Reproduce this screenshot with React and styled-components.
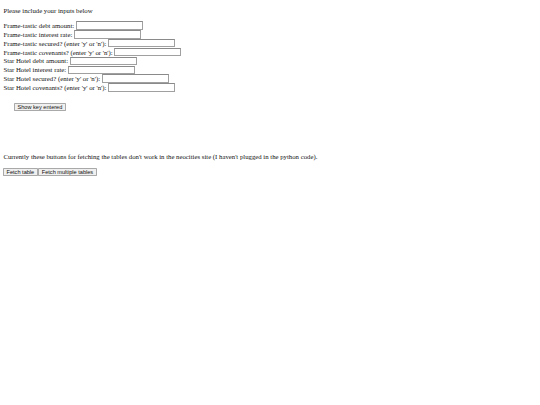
import React from 'react';
import styled, { createGlobalStyle } from 'styled-components';

const GlobalStyle = createGlobalStyle`
    html {
        zoom: 0.421875;
    }
    body {
        margin: 0 8px 8px 8px;
        font-family: "Liberation Serif", "Times New Roman", serif;
        font-size: 16px;
        color: #111;
        background: white;
    }
`

const Intro = styled.p`
    margin: 16px 0;
    line-height: 18px;
`

const Form = styled.form`
    margin: 0;
`

const Row = styled.div`
    display: flex;
    align-items: center;
    gap: 4px;
    height: 21px;
`

const TextInput = styled.input`
    box-sizing: border-box;
    font-family: "Liberation Sans", Arial, sans-serif;
    font-size: 13.33px;
    width: 159px;
    height: 20px;
    padding: 1px 2px;
    margin: 0;
    border: 1px solid #a0a0a0;
    border-top-color: #8a8a8a;
`

const Button = styled.button`
    font-family: "Liberation Sans", Arial, sans-serif;
    font-size: 13.33px;
    padding: 1px 6px;
    height: 19px;
    background: #f0f0f0;
    border: 1px solid #a9a9a9;
    border-radius: 2px;
    color: #111;
`

const KeyBox = styled.div`
    margin: 25px 0 0 25px;
`

const Note = styled.p`
    margin: 100px 0 18px;
    line-height: 18px;
`

const ButtonRow = styled.div`
    display: flex;
    gap: 1px;
    margin-left: -1px;
`

const fields = [
    'Frame-tastic debt amount:',
    'Frame-tastic interest rate:',
    "Frame-tastic secured? (enter 'y' or 'n'):",
    "Frame-tastic covenants? (enter 'y' or 'n'):",
    'Star Hotel debt amount:',
    'Star Hotel interest rate:',
    "Star Hotel secured? (enter 'y' or 'n'):",
    "Star Hotel covenants? (enter 'y' or 'n'):",
];

const App = () => (
    <>
        <GlobalStyle />
        <Intro>Please include your inputs below</Intro>
        <Form onSubmit={ e => e.preventDefault() }>
            { fields.map(label => (
                <Row key={ label }>
                    <span>{ label }</span>
                    <TextInput type="text" />
                </Row>
            )) }
        </Form>
        <KeyBox>
            <Button type="button">Show key entered</Button>
        </KeyBox>
        <Note>Currently these buttons for fetching the tables don't work in the neocities site (I haven't plugged in the python code).</Note>
        <ButtonRow>
            <Button type="button">Fetch table</Button>
            <Button type="button">Fetch multiple tables</Button>
        </ButtonRow>
    </>
);

export default App;
